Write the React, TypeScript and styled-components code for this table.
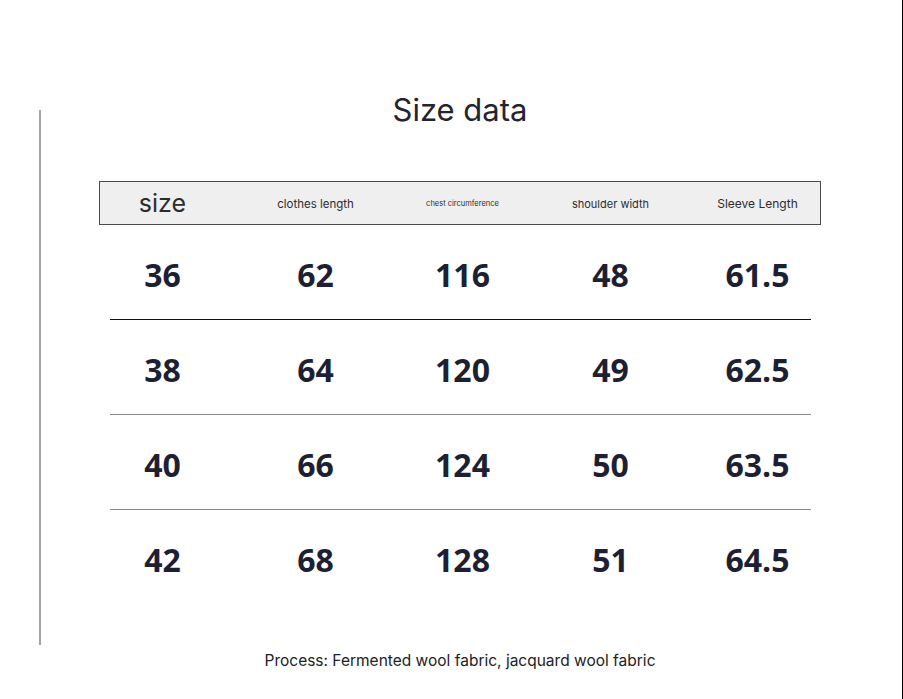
import styled, { createGlobalStyle } from "styled-components"

const GlobalStyle = createGlobalStyle`
  html, body {
    margin: 0;
    padding: 0;
    background: #fff;
  }
`

const headers = [
  { label: "size", size: 25 },
  { label: "clothes length", size: 11.5 },
  { label: "chest circumference", size: 7.5 },
  { label: "shoulder width", size: 11 },
  { label: "Sleeve Length", size: 12 },
]

const rows = [
  ["36", "62", "116", "48", "61.5"],
  ["38", "64", "120", "49", "62.5"],
  ["40", "66", "124", "50", "63.5"],
  ["42", "68", "128", "51", "64.5"],
]

export default function App() {
  return <>
    <GlobalStyle />
    <Page>
      <LeftRule />
      <Main>
        <Title>Size data</Title>
        <HeaderBox>
          <Cells>
            {headers.map(h => <HeadCell key={h.label} $size={h.size}>{h.label}</HeadCell>)}
          </Cells>
        </HeaderBox>
        {rows.map((row, i) => (
          <RowBlock key={row[0]}>
            <Cells $height={94}>
              {row.map((v, j) => <NumCell key={j}>{v}</NumCell>)}
            </Cells>
            {i < rows.length - 1 && <Divider $dark={i === 0} />}
          </RowBlock>
        ))}
        <Footer>Process: Fermented wool fabric, jacquard wool fabric</Footer>
      </Main>
    </Page>
  </>
}

const Page = styled.div`
  width: 903px;
  height: 699px;
  box-sizing: border-box;
  border-right: 1px solid #000;
  display: flex;
  overflow: hidden;
  font-family: Inter, "Liberation Sans", sans-serif;
`

const LeftRule = styled.div`
  flex: none;
  width: 2px;
  height: 535px;
  margin: 110px 0 0 39px;
  background: #a3a3a3;
`

const Main = styled.div`
  flex: 1;
  padding-right: 23px;
  display: flex;
  flex-direction: column;
  align-items: center;
`

const Title = styled.h1`
  margin: 90px 0 0;
  height: 40px;
  line-height: 40px;
  font-size: 31px;
  font-weight: 400;
  color: #24242e;
`

const HeaderBox = styled.div`
  margin-top: 51px;
  width: 722px;
  height: 44px;
  box-sizing: border-box;
  border: 1px solid #4a4a4a;
  background: #efefef;
  display: flex;
  justify-content: center;
`

const Cells = styled.div<{ $height?: number }>`
  flex: none;
  width: 743px;
  height: ${p => p.$height ? `${p.$height}px` : "100%"};
  display: grid;
  grid-template-columns: 148px 158px 136px 160px 134px;
  justify-content: start;
  align-items: center;
  justify-items: center;
`

const HeadCell = styled.span<{ $size: number }>`
  font-size: ${p => p.$size}px;
  color: #2c2c30;
  white-space: nowrap;
  padding-top: ${p => p.$size > 20 ? 0 : 1}px;
`

const RowBlock = styled.div`
  display: flex;
  flex-direction: column;
  align-items: center;
`

const NumCell = styled.span`
  font-family: "Open Sans", "Noto Sans", sans-serif;
  font-weight: 700;
  font-size: 32px;
  color: #1d1f33;
  padding-top: 5px;
`

const Divider = styled.div<{ $dark?: boolean }>`
  width: 701px;
  height: 1px;
  background: ${p => p.$dark ? "#111" : "#8a8a8a"};
`

const Footer = styled.p`
  margin: 47px 0 0;
  line-height: 20px;
  font-size: 15.5px;
  color: #222;
`
